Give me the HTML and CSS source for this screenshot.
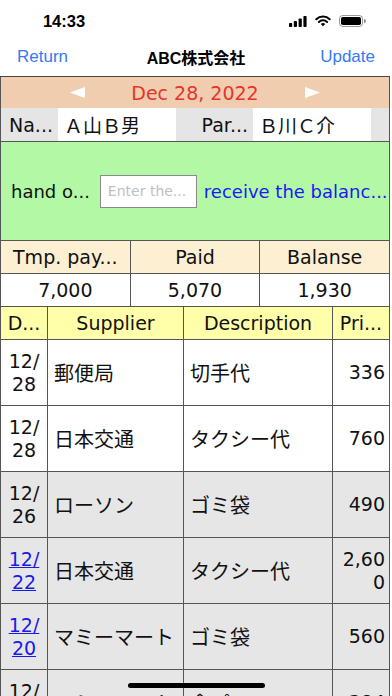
FILE: index.html
```html
<!DOCTYPE html>
<html lang="ja">
<head>
<meta charset="utf-8">
<title>ABC株式会社</title>
<link rel="stylesheet" href="styles.css">
</head>
<body>
<div class="screen">
  <div class="status">
    <span class="time">14:33</span>
    <div class="status-icons">
      <svg class="sig" width="18" height="11" viewBox="0 0 18 11">
        <rect x="0" y="7" width="3.2" height="4" rx="0.8"/>
        <rect x="4.8" y="5" width="3.2" height="6" rx="0.8"/>
        <rect x="9.6" y="2.5" width="3.2" height="8.5" rx="0.8"/>
        <rect x="14.4" y="0" width="3.2" height="11" rx="0.8"/>
      </svg>
      <svg class="wifi" width="16" height="12" viewBox="0 0 16 12">
        <path d="M1.3 4.3 A9.5 9.5 0 0 1 14.7 4.3" fill="none" stroke="#000" stroke-width="2" stroke-linecap="round"/>
        <path d="M3.9 7 A5.8 5.8 0 0 1 12.1 7" fill="none" stroke="#000" stroke-width="2" stroke-linecap="round"/>
        <path d="M8 11.3 L5.8 9.1 A3.1 3.1 0 0 1 10.2 9.1 Z" fill="#000"/>
      </svg>
      <svg class="batt" width="27" height="12" viewBox="0 0 27 12">
        <rect x="0.5" y="0.5" width="23" height="11" rx="3.2" fill="none" stroke="#000" stroke-opacity="0.4"/>
        <rect x="2" y="2" width="20" height="8" rx="1.8" fill="#000"/>
        <path d="M25 4 v4 a2 2 0 0 0 0 -4z" fill="#000" fill-opacity="0.45"/>
      </svg>
    </div>
  </div>

  <div class="nav">
    <span class="nav-btn left">Return</span>
    <span class="nav-title">ABC株式会社</span>
    <span class="nav-btn right">Update</span>
  </div>

  <div class="main">
    <div class="datebar">
      <svg class="arrow" width="15" height="11" viewBox="0 0 15 11"><polygon points="0,5.5 15,0 15,11" fill="#fff"/></svg>
      <span class="date">Dec 28, 2022</span>
      <svg class="arrow" width="15" height="11" viewBox="0 0 15 11"><polygon points="15,5.5 0,0 0,11" fill="#fff"/></svg>
    </div>

    <div class="names">
      <div class="n-label">Na...</div>
      <div class="n-value">Ａ山Ｂ男</div>
      <div class="n-label">Par...</div>
      <div class="n-value">Ｂ川Ｃ介</div>
      <div class="n-label"></div>
    </div>

    <div class="handover">
      <span class="hand">hand o...</span>
      <div class="input">Enter the...</div>
      <span class="receive">receive the balanc...</span>
    </div>

    <div class="summary">
      <div class="s-head">Tmp. pay...</div>
      <div class="s-head">Paid</div>
      <div class="s-head">Balanse</div>
      <div class="s-val">7,000</div>
      <div class="s-val">5,070</div>
      <div class="s-val">1,930</div>
    </div>

    <div class="items">
      <div class="i-head">D...</div>
      <div class="i-head">Supplier</div>
      <div class="i-head">Description</div>
      <div class="i-head">Pri...</div>

      <div class="row">
        <div class="c-date">12/<wbr>28</div>
        <div class="c-text">郵便局</div>
        <div class="c-text">切手代</div>
        <div class="c-price">336</div>
      </div>
      <div class="row">
        <div class="c-date">12/<wbr>28</div>
        <div class="c-text">日本交通</div>
        <div class="c-text">タクシー代</div>
        <div class="c-price">760</div>
      </div>
      <div class="row gray">
        <div class="c-date">12/<wbr>26</div>
        <div class="c-text">ローソン</div>
        <div class="c-text">ゴミ袋</div>
        <div class="c-price">490</div>
      </div>
      <div class="row gray">
        <div class="c-date"><a class="d-link">12/<wbr>22</a></div>
        <div class="c-text">日本交通</div>
        <div class="c-text">タクシー代</div>
        <div class="c-price">2,600</div>
      </div>
      <div class="row gray">
        <div class="c-date"><a class="d-link">12/<wbr>20</a></div>
        <div class="c-text">マミーマート</div>
        <div class="c-text">ゴミ袋</div>
        <div class="c-price">560</div>
      </div>
      <div class="row gray">
        <div class="c-date">12/<wbr>18</div>
        <div class="c-text">マミーマート</div>
        <div class="c-text">食パン</div>
        <div class="c-price">384</div>
      </div>
    </div>
  </div>

  <div class="home-indicator"></div>
</div>
</body>
</html>
```

FILE: styles.css
```css
* {
  box-sizing: border-box;
}

body {
  margin: 0;
  background: #fff;
  font-family: "DejaVu Sans", "Noto Sans CJK JP", sans-serif;
  color: #111;
}

.screen {
  position: relative;
  width: 392px;
  height: 696px;
  overflow: hidden;
  background: #fff;
}

/* status bar */
.status {
  height: 44px;
  display: flex;
  align-items: center;
  justify-content: space-between;
  padding: 0 26px 0 42px;
}

.time {
  font-family: "Liberation Sans", sans-serif;
  font-weight: 700;
  font-size: 16.5px;
  width: 44px;
  text-align: center;
  color: #000;
  margin-top: -2px;
}

.status-icons {
  display: flex;
  align-items: center;
  gap: 8px;
  margin-top: -2px;
}

/* nav */
.nav {
  height: 32px;
  padding: 0 17px 6px;
  display: grid;
  grid-template-columns: 1fr auto 1fr;
  align-items: center;
  font-family: "Liberation Sans", "Noto Sans CJK JP", sans-serif;
}

.nav-btn {
  font-size: 17px;
  color: #3478f6;
}

.nav-btn.right {
  text-align: right;
}

.nav-title {
  font-size: 16px;
  font-weight: 700;
  color: #000;
}

/* main frame */
.main {
  width: 390px;
  border-top: 1px solid #444;
  border-left: 1px solid #555;
  border-right: 1px solid #555;
}

.datebar {
  height: 31px;
  background: #f1cdb0;
  display: flex;
  align-items: center;
  justify-content: center;
  gap: 46px;
}

.date {
  font-size: 19px;
  color: #e6342a;
}

.names {
  height: 34px;
  display: grid;
  grid-template-columns: 57px 118px 77px 118px 18px;
  border-bottom: 1px solid #555;
  font-size: 19px;
}

.n-label {
  background: #e5e5e5;
  display: flex;
  align-items: center;
  justify-content: flex-end;
  padding-right: 5px;
}

.n-value {
  background: #fff;
  display: flex;
  align-items: center;
  padding-left: 6px;
  font-family: "Noto Sans CJK JP", sans-serif;
}

.handover {
  height: 98px;
  background: #b3f8a5;
  display: flex;
  align-items: center;
  padding-left: 10px;
  font-size: 18px;
}

.hand {
  margin-right: 10px;
}

.input {
  width: 97px;
  height: 33px;
  border: 1px solid #8a8a8a;
  background: #fff;
  font-size: 14px;
  color: #c0c0c0;
  display: flex;
  align-items: center;
  padding-left: 7px;
  margin-right: 7px;
}

.receive {
  color: #1a1af5;
  white-space: nowrap;
}

/* summary */
.summary {
  display: grid;
  grid-template-columns: 1fr 1fr 1fr;
  grid-auto-rows: 32px;
  gap: 1px;
  background: #555;
  border-top: 1px solid #555;
  border-bottom: 1px solid #555;
  font-size: 19px;
}

.s-head,
.s-val {
  display: flex;
  align-items: center;
  justify-content: center;
}

.s-head {
  background: #fcefd2;
}

.s-val {
  background: #fff;
}

/* items */
.items {
  display: grid;
  grid-template-columns: 46px 135px 148px 56px;
  grid-template-rows: 32px;
  grid-auto-rows: 65px;
  gap: 1px;
  background: #555;
  font-size: 19px;
}

.i-head {
  background: #ffffa9;
  display: flex;
  align-items: center;
  justify-content: center;
}

.row {
  display: contents;
}

.row > div {
  background: #fff;
  display: flex;
  align-items: center;
  line-height: 23px;
}

.row.gray > div {
  background: #e6e6e6;
}

.row > .c-date {
  justify-content: center;
  text-align: center;
}

.row > .c-text {
  padding-left: 6px;
  font-size: 20px;
  font-family: "Noto Sans CJK JP", sans-serif;
}

.row > .c-price {
  justify-content: flex-end;
  text-align: right;
  padding-right: 4px;
  word-break: break-all;
}

.d-link {
  color: #1a1ae6;
  text-decoration: underline;
}

.home-indicator {
  position: absolute;
  left: 128px;
  top: 683px;
  width: 137px;
  height: 5px;
  border-radius: 3px;
  background: #000;
}
```
